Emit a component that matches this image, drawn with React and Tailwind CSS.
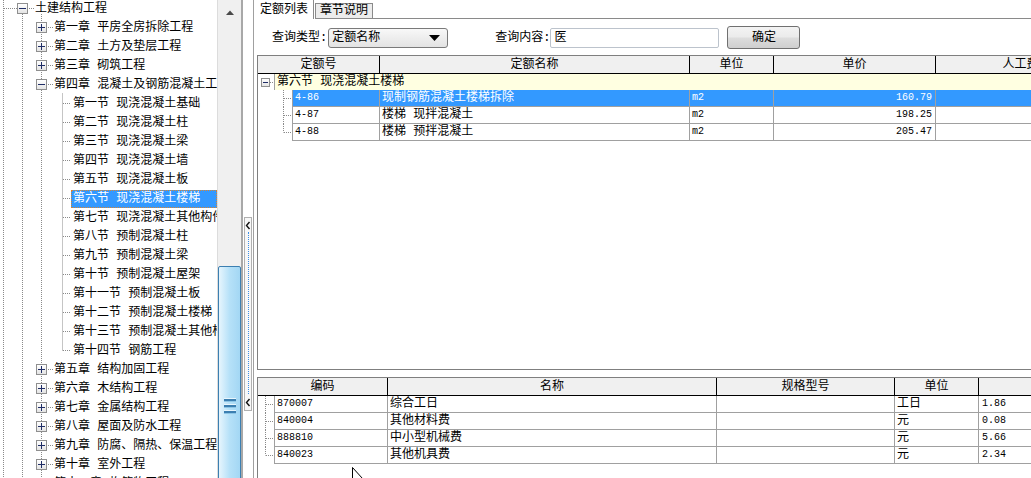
import React from "react";

const FONT = "font-['Liberation_Mono','Noto_Sans_CJK_SC',monospace]";

const tree = [
  { lv: 0, t: "土建结构工程", box: "-" },
  { lv: 1, t: "第一章 平房全房拆除工程", box: "+" },
  { lv: 1, t: "第二章 土方及垫层工程", box: "+" },
  { lv: 1, t: "第三章 砌筑工程", box: "+" },
  { lv: 1, t: "第四章 混凝土及钢筋混凝土工程", box: "-" },
  { lv: 2, t: "第一节 现浇混凝土基础" },
  { lv: 2, t: "第二节 现浇混凝土柱" },
  { lv: 2, t: "第三节 现浇混凝土梁" },
  { lv: 2, t: "第四节 现浇混凝土墙" },
  { lv: 2, t: "第五节 现浇混凝土板" },
  { lv: 2, t: "第六节 现浇混凝土楼梯", sel: true },
  { lv: 2, t: "第七节 现浇混凝土其他构件" },
  { lv: 2, t: "第八节 预制混凝土柱" },
  { lv: 2, t: "第九节 预制混凝土梁" },
  { lv: 2, t: "第十节 预制混凝土屋架" },
  { lv: 2, t: "第十一节 预制混凝土板" },
  { lv: 2, t: "第十二节 预制混凝土楼梯" },
  { lv: 2, t: "第十三节 预制混凝土其他构件" },
  { lv: 2, t: "第十四节 钢筋工程" },
  { lv: 1, t: "第五章 结构加固工程", box: "+" },
  { lv: 1, t: "第六章 木结构工程", box: "+" },
  { lv: 1, t: "第七章 金属结构工程", box: "+" },
  { lv: 1, t: "第八章 屋面及防水工程", box: "+" },
  { lv: 1, t: "第九章 防腐、隔热、保温工程", box: "+" },
  { lv: 1, t: "第十章 室外工程", box: "+" },
  { lv: 1, t: "第十一章 构筑物工程", box: "+" },
];

const indent = { 0: "pl-[17px]", 1: "pl-[36px]", 2: "pl-[71px]" };

const quotas = [
  { code: "4-86", name: "现制钢筋混凝土楼梯拆除", unit: "m2", price: "160.79", sel: true },
  { code: "4-87", name: "楼梯 现拌混凝土", unit: "m2", price: "198.25" },
  { code: "4-88", name: "楼梯 预拌混凝土", unit: "m2", price: "205.47" },
];

const materials = [
  { code: "870007", name: "综合工日", unit: "工日", qty: "1.86" },
  { code: "840004", name: "其他材料费", unit: "元", qty: "0.08" },
  { code: "888810", name: "中小型机械费", unit: "元", qty: "5.66" },
  { code: "840023", name: "其他机具费", unit: "元", qty: "2.34" },
];

function ExpandBox({ sign, size = 11 }) {
  const m = (size - 1) / 2;
  return (
    <div
      className="flex shrink-0 items-center justify-center border border-[#8f8f8f] bg-gradient-to-b from-white to-[#e4e4e4]"
      style={{ width: size, height: size }}
    >
      <svg width={size - 2} height={size - 2}>
        <line x1="1" y1={m - 0.5} x2={size - 3} y2={m - 0.5} stroke="#1f2d66" strokeWidth="1" />
        {sign === "+" && <line x1={m - 0.5} y1="1" x2={m - 0.5} y2={size - 3} stroke="#1f2d66" strokeWidth="1" />}
      </svg>
    </div>
  );
}

function TreeLines() {
  const dot = { stroke: "#8a8a8a", strokeDasharray: "1 1", strokeWidth: 1 };
  const c = (i) => 8.5 + 19 * i;
  return (
    <svg className="pointer-events-none absolute inset-0" width="217" height="478">
      <line x1="3.5" y1="0" x2="3.5" y2="478" {...dot} />
      <line x1="4" y1={c(0)} x2="17" y2={c(0)} {...dot} />
      <line x1="22.5" y1="14" x2="22.5" y2="478" {...dot} />
      <line x1="27" y1={c(0)} x2="34" y2={c(0)} {...dot} />
      <line x1="41.5" y1="14" x2="41.5" y2="478" {...dot} />
      <line x1="62.5" y1={c(4) + 9} x2="62.5" y2={c(18)} {...dot} />
      {tree.map((r, i) =>
        r.lv === 1 ? (
          <line key={i} x1="46" y1={c(i)} x2="53" y2={c(i)} {...dot} />
        ) : r.lv === 2 ? (
          <line key={i} x1="63" y1={c(i)} x2="70" y2={c(i)} {...dot} />
        ) : null
      )}
    </svg>
  );
}

function RowLines({ w, x, last }) {
  return (
    <svg width={w} height="17" className="shrink-0">
      <line x1={x + 0.5} y1="0" x2={x + 0.5} y2={last ? 8.5 : 17} stroke="#8a8a8a" strokeDasharray="1 1" />
      <line x1={x + 1} y1="8.5" x2={w} y2="8.5" stroke="#8a8a8a" strokeDasharray="1 1" />
    </svg>
  );
}

function Chevron() {
  return (
    <svg width="6" height="9" viewBox="0 0 6 9">
      <path d="M4.5 1 L1.5 4.5 L4.5 8" fill="none" stroke="#111" strokeWidth="1.4" />
    </svg>
  );
}

export default function App() {
  return (
    <div className={`relative flex h-[478px] w-[1031px] overflow-hidden bg-white text-[12px] leading-[14px] text-black ${FONT}`}>
      {/* tree */}
      <div className="relative h-full w-[217px] shrink-0 overflow-hidden">
        <TreeLines />
        <div className="relative -mt-[1px]">
          {tree.map((r, i) => (
            <div key={i} className={`flex h-[19px] items-center whitespace-nowrap ${indent[r.lv]}`}>
              {r.box && <ExpandBox sign={r.box} />}
              {r.lv < 2 ? (
                <span className="ml-[7px]">{r.t}</span>
              ) : (
                <span
                  className={`flex h-[18px] items-center border px-[1px] ${
                    r.sel ? "w-[146px] border-dotted border-[#d9842f] bg-[#3399ff] text-white" : "border-transparent"
                  }`}
                >
                  {r.t}
                </span>
              )}
            </div>
          ))}
        </div>
      </div>

      {/* scrollbar */}
      <div className="flex h-full w-[26px] shrink-0 flex-col overflow-hidden border-l border-r-2 border-l-[#dcdcdc] border-r-[#a8a8a8] bg-[#f0f0f0]">
        <div className="flex h-[22px] shrink-0 items-center justify-center pt-[2px]">
          <svg width="8" height="5" viewBox="0 0 8 5">
            <path d="M0 5 L4 0.5 L8 5 Z" fill="#4a4a4a" />
          </svg>
        </div>
        <div className="h-[244px] shrink-0" />
        <div className="flex h-[260px] shrink-0 flex-col items-center rounded-[2px] border border-[#3c7fb1] bg-gradient-to-r from-[#e6f5fd] via-[#b6e1f8] to-[#a3d7f4] pt-[131px]">
          {[0, 1, 2].map((k) => (
            <div key={k} className="mb-[2px] w-[12px]">
              <div className="h-[1px] bg-[#e8f6fd]" />
              <div className="h-[2px] bg-[#3c7fb1]" />
              <div className="h-[1px] bg-[#8cc5e6]" />
            </div>
          ))}
        </div>
      </div>

      {/* splitter */}
      <div className="flex h-full w-[10px] shrink-0 flex-col items-center bg-white pt-[217px]">
        <div className="flex h-[194px] w-[8px] flex-col items-center border border-[#b0b0b0] bg-[#f7f7f7]">
          <div className="flex h-[14px] items-center">
            <Chevron />
          </div>
          <div className="flex-1 border-l border-dotted border-[#3a8ee6]" />
          <div className="flex h-[16px] items-center">
            <Chevron />
          </div>
        </div>
      </div>

      {/* right panel */}
      <div className="flex h-full min-w-0 flex-1 flex-col overflow-hidden border-l border-[#a0a0a0]">
        {/* tabs */}
        <div className="flex h-[19px] shrink-0 items-end">
          <div className="flex h-[19px] w-[60px] items-center border-r border-[#8a8a8a] pl-[6px]">定额列表</div>
          <div className="ml-[1px] flex h-[16px] w-[58px] items-center justify-center border border-[#8a8a8a] bg-[#ececec]">
            章节说明
          </div>
          <div className="h-[1px] flex-1 self-end bg-[#8a8a8a]" />
        </div>

        {/* query */}
        <div className="mt-[7px] flex h-[23px] shrink-0 items-center pl-[18px]">
          <span>查询类型:</span>
          <div className="ml-[1px] flex h-[20px] w-[120px] items-center justify-between rounded-[3px] border border-[#7a7a7a] bg-gradient-to-b from-[#f8f8f8] to-[#e3e3e3] pl-[3px] pr-[7px]">
            <span>定额名称</span>
            <svg width="11" height="6" viewBox="0 0 11 6">
              <path d="M0 0 H11 L5.5 6 Z" fill="#000" />
            </svg>
          </div>
          <span className="ml-[47px]">查询内容:</span>
          <div className="flex h-[20px] w-[169px] items-center rounded-[2px] border border-[#bcc3cc] pl-[3px]">医</div>
          <div className="ml-[8px] flex h-[23px] w-[73px] items-center justify-center rounded-[3px] border border-[#707070] bg-[linear-gradient(#f3f3f3_0%,#ebebeb_48%,#dddddd_52%,#cfcfcf_100%)]">
            确定
          </div>
        </div>

        {/* upper grid */}
        <div className="ml-[3px] mt-[6px] h-[315px] w-[900px] shrink-0 border-b border-l border-t border-[#7f7f7f]">
          <div className="flex h-[18px] border-b border-black bg-[#f0f0f0]">
            {[
              ["定额号", "w-[122px]"],
              ["定额名称", "w-[310px]"],
              ["单位", "w-[84px]"],
              ["单价", "w-[162px]"],
              ["人工费", "w-[170px]"],
            ].map(([h, w]) => (
              <div key={h} className={`flex shrink-0 items-center justify-center border-r border-black ${w}`}>
                {h}
              </div>
            ))}
          </div>
          <div className="flex h-[16px]">
            <div className="flex w-[16px] shrink-0 items-center pl-[3px]">
              <ExpandBox sign="-" size={9} />
              <svg width="4" height="16">
                <line x1="0" y1="8.5" x2="4" y2="8.5" stroke="#8a8a8a" strokeDasharray="1 1" />
              </svg>
            </div>
            <div className="flex flex-1 items-center border-l border-[#a0a0a0] bg-[#ffffe1] pl-[2px]">第六节 现浇混凝土楼梯</div>
          </div>
          {quotas.map((q, i) => {
            const cell = `flex shrink-0 items-center border-b border-r border-[#a0a0a0] ${q.sel ? "bg-[#3399ff] text-white" : ""}`;
            return (
              <div key={q.code} className="flex h-[17px]">
                <RowLines w={34} x={25} last={i === quotas.length - 1} />
                <div className={`${cell} w-[88px] border-l pl-[2px] text-[10px]`}>{q.code}</div>
                <div className={`${cell} w-[310px] pl-[2px]`}>{q.name}</div>
                <div className={`${cell} w-[84px] pl-[2px] text-[10px]`}>{q.unit}</div>
                <div className={`${cell} w-[162px] justify-end pr-[3px] text-[10px]`}>{q.price}</div>
                <div className={`${cell} w-[170px]`} />
              </div>
            );
          })}
        </div>

        {/* lower grid */}
        <div className="ml-[3px] mt-[7px] w-[900px] flex-1 border-l border-t border-[#7f7f7f]">
          <div className="flex h-[18px] border-b border-black bg-[#f0f0f0]">
            {[
              ["编码", "w-[130px]"],
              ["名称", "w-[329px]"],
              ["规格型号", "w-[178px]"],
              ["单位", "w-[84px]"],
              ["", "w-[130px]"],
            ].map(([h, w], k) => (
              <div key={k} className={`flex shrink-0 items-center justify-center border-r border-black ${w}`}>
                {h}
              </div>
            ))}
          </div>
          {materials.map((m, i) => {
            const cell = "flex shrink-0 items-center border-b border-r border-[#a0a0a0]";
            return (
              <div key={m.code} className="flex h-[17px]">
                <RowLines w={16} x={7} last={i === materials.length - 1} />
                <div className={`${cell} w-[114px] border-l pl-[2px] text-[10px]`}>{m.code}</div>
                <div className={`${cell} w-[329px] pl-[2px]`}>{m.name}</div>
                <div className={`${cell} w-[178px]`} />
                <div className={`${cell} w-[84px] pl-[2px]`}>{m.unit}</div>
                <div className={`${cell} w-[130px] pl-[3px] text-[10px]`}>{m.qty}</div>
              </div>
            );
          })}
        </div>
      </div>

      {/* mouse pointer */}
      <svg className="pointer-events-none absolute left-[352px] top-[467px]" width="12" height="19" viewBox="0 0 12 19">
        <path d="M0.5 0.5 L0.5 15.5 L4 12 L6.5 18 L8.5 17 L6 11.5 L10.5 11.5 Z" fill="#fff" stroke="#000" strokeWidth="1" />
      </svg>
    </div>
  );
}
